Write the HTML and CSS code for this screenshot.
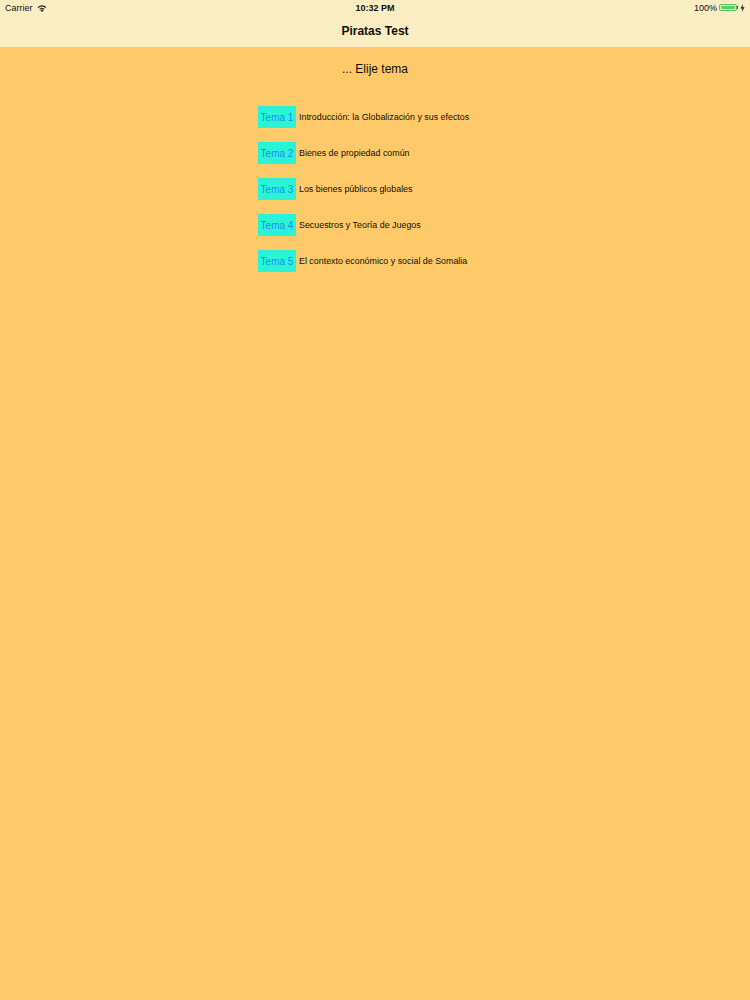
FILE: index.html
```html
<!DOCTYPE html>
<html lang="es">
<head>
    <meta charset="UTF-8">
    <meta name="viewport" content="width=device-width, initial-scale=1.0">
    <title>Piratas Test</title>
    <link rel="stylesheet" href="styles.css">
</head>
<body>
    <div class="top-bar">
        <div class="status-bar">
            <div class="status-left">
                <span>Carrier</span>
                <svg class="wifi" width="10" height="8" viewBox="0 0 10 8">
                    <path d="M5 8 L3.4 6.2 A2.4 2.4 0 0 1 6.6 6.2 Z" fill="#222"/>
                    <path d="M2.3 5 A3.9 3.9 0 0 1 7.7 5 L7 5.8 A2.9 2.9 0 0 0 3 5.8 Z" fill="#222"/>
                    <path d="M0.6 3.2 A6.2 6.2 0 0 1 9.4 3.2 L8.6 4.1 A5 5 0 0 0 1.4 4.1 Z" fill="#222"/>
                </svg>
            </div>
            <div class="status-time">10:32 PM</div>
            <div class="status-right">
                <span>100%</span>
                <span class="battery"><span class="battery-fill"></span></span>
                <span class="battery-tip"></span>
                <svg class="bolt" width="5" height="8" viewBox="0 0 5 8">
                    <path d="M3 0 L0.5 4.6 H2.3 L1.8 8 L4.5 3.2 H2.7 Z" fill="#222"/>
                </svg>
            </div>
        </div>
        <div class="nav-bar">Piratas Test</div>
    </div>

    <div class="content">
        <h1 class="heading">... Elije tema</h1>

        <ul class="topic-list">
            <li class="topic"><button class="topic-btn">Tema 1</button><span class="topic-label">Introducción: la Globalización y sus efectos</span></li>
            <li class="topic"><button class="topic-btn">Tema 2</button><span class="topic-label">Bienes de propiedad común</span></li>
            <li class="topic"><button class="topic-btn">Tema 3</button><span class="topic-label">Los bienes públicos globales</span></li>
            <li class="topic"><button class="topic-btn">Tema 4</button><span class="topic-label">Secuestros y Teoría de Juegos</span></li>
            <li class="topic"><button class="topic-btn">Tema 5</button><span class="topic-label">El contexto económico y social de Somalia</span></li>
        </ul>
    </div>
</body>
</html>
```

FILE: styles.css
```css
html, body {
    margin: 0;
    padding: 0;
}
body {
    font-family: "Liberation Sans", Arial, sans-serif;
    background: #fec968;
    color: #111;
    min-height: 1000px;
}
.top-bar {
    background: #f9edc1;
    border-bottom: 1px solid #e4cf95;
}
.status-bar {
    height: 15px;
    display: flex;
    align-items: center;
    justify-content: space-between;
    padding: 0 5px;
    font-size: 9px;
    position: relative;
}
.status-left {
    display: flex;
    align-items: center;
    gap: 4px;
}
.status-time {
    position: absolute;
    left: 0;
    right: 0;
    text-align: center;
    font-weight: bold;
    pointer-events: none;
}
.status-right {
    display: flex;
    align-items: center;
}
.battery {
    margin-left: 2px;
    width: 18px;
    height: 7px;
    border: 1px solid #5bbf5b;
    border-radius: 2px;
    box-sizing: border-box;
    padding: 1px;
    display: flex;
}
.battery-fill {
    flex: 1;
    background: #4cd964;
    border-radius: 1px;
}
.battery-tip {
    width: 1px;
    height: 3px;
    background: #555;
    margin-right: 2px;
}
.nav-bar {
    height: 31px;
    display: flex;
    align-items: center;
    justify-content: center;
    font-size: 12px;
    font-weight: bold;
    padding-bottom: 1px;
}
.content {
    padding-top: 14px;
}
.heading {
    margin: 0;
    text-align: center;
    font-size: 12px;
    font-weight: normal;
    line-height: 15px;
}
.topic-list {
    list-style: none;
    margin: 29px 0 0 258px;
    padding: 0;
    display: flex;
    flex-direction: column;
    gap: 14px;
}
.topic {
    display: flex;
    align-items: center;
    height: 22px;
}
.topic-btn {
    width: 38px;
    height: 22px;
    border: none;
    padding: 0;
    background: #2bf4d6;
    color: #1c8df4;
    font-family: "Liberation Sans", Arial, sans-serif;
    font-size: 10px;
    cursor: pointer;
}
.topic-label {
    margin-left: 3px;
    font-size: 8.9px;
}
```
